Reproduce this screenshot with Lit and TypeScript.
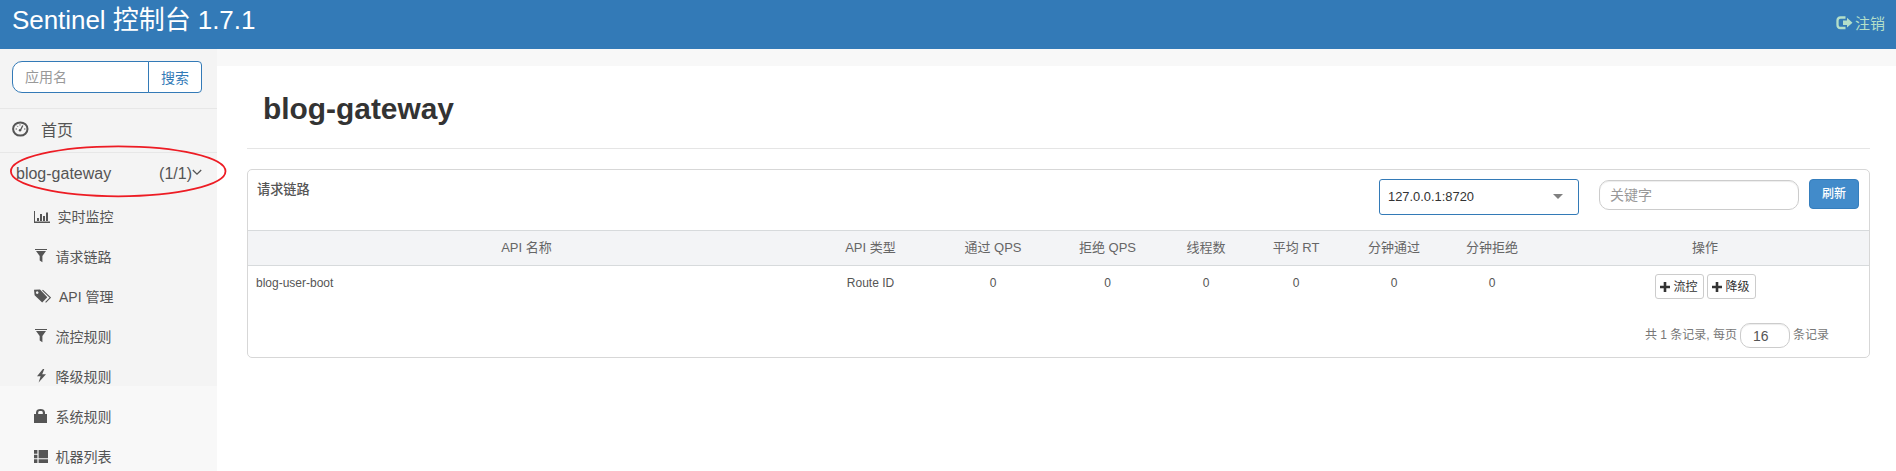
import { LitElement, html, css, svg } from "lit";
import { customElement } from "lit/decorators.js";

const font = css`"Liberation Sans", Arial, "Noto Sans CJK SC", sans-serif`;

const icons = {
  chart: svg`<path d="M0.5 0V11H16M0 11.5H16" fill="none" stroke="currentColor"/><path d="M3 7h2v3H3zM6 3h2v7H6zM9 5h2v5H9zM12 1.5h2V10h-2z" fill="currentColor"/>`,
  filter: svg`<path d="M0 0h12v1H0zM1 2h10L7.400 7v6.200L4.700 11.500V7z" fill="currentColor"/>`,
  tags: svg`<path fill-rule="evenodd" d="M0 .8 6 .6 13.3 8.2 8.2 13.6 .6 6.2zM3.2 2.3a1.3 1.3 0 1 0 .01 0z" fill="currentColor"/><path d="M8.5 1.2 16.3 8.6 11.6 13.4" fill="none" stroke="currentColor" stroke-width="1.1"/>`,
  flash: svg`<path d="M6.9 0 1 7.3h3.6L2.6 13.4 10 5.3H6.2L8.3 0z" fill="currentColor"/>`,
  lock: svg`<path fill-rule="evenodd" d="M0 5h2V3.2C2.3 1 3.8 0 6.5 0S10.700 1 11 3.200V5h2v9H0zM4.200 5h4.600V3.400C8.700 2.400 7.900 2 6.500 2S4.300 2.400 4.200 3.400z" fill="currentColor"/>`,
  list: svg`<path d="M0 0h3.400v3.700H0zM0 4.700h3.400v3.600H0zM0 9.300h3.400V13H0zM4.600 0h9.400v8.300H4.600zM4.600 9.300h9.400V13H4.600z" fill="currentColor"/>`,
};

type IconName = keyof typeof icons;

const menu: { icon: IconName; label: string; w: number; h: number; left: number; gap: number; lift: number }[] = [
  { icon: "chart", label: "实时监控", w: 16, h: 12, left: 34, gap: 7.5, lift: 0 },
  { icon: "filter", label: "请求链路", w: 12, h: 14, left: 35, gap: 8.5, lift: 3 },
  { icon: "tags", label: "API 管理", w: 17, h: 14, left: 34, gap: 8, lift: 2 },
  { icon: "filter", label: "流控规则", w: 12, h: 14, left: 35, gap: 8.5, lift: 3 },
  { icon: "flash", label: "降级规则", w: 11, h: 14, left: 36, gap: 8.5, lift: 2 },
  { icon: "lock", label: "系统规则", w: 13, h: 14, left: 34, gap: 8.5, lift: 2 },
  { icon: "list", label: "机器列表", w: 14, h: 13, left: 34, gap: 7.5, lift: 1 },
];

const headers = ["API 名称", "API 类型", "通过 QPS", "拒绝 QPS", "线程数", "平均 RT", "分钟通过", "分钟拒绝", "操作"];
const record = ["blog-user-boot", "Route ID", "0", "0", "0", "0", "0", "0"];

@customElement("side-bar")
class SideBar extends LitElement {
  static styles = css`
    :host { display: block; position: relative; width: 217px; height: 422px; flex: none; overflow: visible;
      background: linear-gradient(#f4f4f4 337px, #f8f8f8 337px); color: #555; font-family: ${font}; }
    * { box-sizing: border-box; }
    .search { display: flex; height: 59px; padding: 12px 0 0 12px; }
    .field { width: 137px; height: 32px; border: 1px solid #337ab7; border-radius: 10px 0 0 10px; background: #fff;
      padding-left: 12px; font-size: 14px; line-height: 30px; color: #999; }
    .go { width: 54px; height: 32px; margin-left: -1px; border: 1px solid #337ab7; border-radius: 0 4px 4px 0; background: #fff;
      text-align: center; font-size: 14px; line-height: 32px; color: #337ab7; }
    .home { display: flex; align-items: center; height: 44px; border-top: 1px solid #e7e7e7; padding: 0 0 4px 12px; gap: 12px;
      font-size: 16px; }
    .app { display: flex; align-items: center; height: 44px; border-top: 1px solid #e7e7e7; padding: 0 15px 2px 16px;
      font-size: 16px; }
    .count { margin-left: auto; }
    .chevron { margin-bottom: 3px; }
    .item { display: flex; align-items: center; height: 40px; font-size: 14px; line-height: 20px; white-space: pre; }
    .menu { padding-top: 1px; }
    svg { display: block; flex: none; }
    .mark { position: absolute; left: 9px; top: 95px; }
  `;
  render() {
    return html`
      <div class="search"><div class="field">应用名</div><div class="go">搜索</div></div>
      <div class="home">
        <svg width="17" height="16" viewBox="0 0 17 16"><ellipse cx="8.300" cy="8" rx="7.200" ry="6.600" fill="none" stroke="currentColor" stroke-width="2"/><path d="M8.300 9.500 10.800 4.500" stroke="currentColor" stroke-width="1.300"/><circle cx="8" cy="9.300" r="1.200" fill="currentColor"/><path d="M3.600 8h1.400M12 8h1.400M5 4.800l.9.900M8 3.300v1.200" stroke="currentColor"/></svg>
        <span>首页</span>
      </div>
      <div class="app">
        <span>blog-gateway</span><span class="count">(1/1)</span>
        <svg class="chevron" width="10" height="7" viewBox="0 0 10 7"><path d="M.8 1 5 5.200 9.200 1" fill="none" stroke="currentColor" stroke-width="1.300"/></svg>
      </div>
      <div class="menu">
        ${menu.map((m) => html`<div class="item" style="padding-left:${m.left}px;gap:${m.gap}px">
          <svg width=${m.w} height=${m.h} viewBox="0 0 ${m.w} ${m.h}" style="margin-bottom:${m.lift}px">${icons[m.icon]}</svg><span>${m.label}</span>
        </div>`)}
      </div>
      <svg class="mark" width="218" height="54" viewBox="0 0 218 54"><ellipse cx="109.200" cy="27.300" rx="107.300" ry="25" fill="none" stroke="#ed1c24" stroke-width="1.800"/></svg>
    `;
  }
}

@customElement("resource-panel")
class ResourcePanel extends LitElement {
  static styles = css`
    :host { display: block; height: 189px; border: 1px solid #d7d7d7; border-radius: 5px; background: #fff;
      color: #555; font-family: ${font}; box-sizing: border-box; overflow: hidden; }
    * { box-sizing: border-box; }
    .head { display: flex; align-items: flex-start; height: 61px; padding: 9px 10px 0 9px; border-bottom: 1px solid #d7dadc; }
    .name { margin-right: auto; font-size: 13.200px; font-weight: 500; line-height: 21px; }
    .select { display: flex; align-items: center; justify-content: space-between; width: 200px; height: 36px; padding: 0 15px 2px 8px;
      border: 1px solid #337ab7; border-radius: 3px; font-size: 12.900px; color: #333; }
    .keyword { width: 200px; height: 30px; margin: 1px 10px 0 20px; padding-left: 10px; border: 1px solid #ccc; border-radius: 10px;
      box-shadow: inset 0 1px 1px rgba(0,0,0,.075); font-size: 14px; line-height: 28px; color: #999; }
    .refresh { width: 50px; height: 30px; border: 1px solid #357ebd; border-radius: 4px; background: #428bca; color: #fff;
      text-align: center; font-size: 12px; line-height: 28px; font-weight: 500; }
    .row { display: grid; grid-template-columns: 557px 131px 114px 115px 82px 98px 98px 98px 1fr; text-align: center; }
    .titles { height: 35px; background: #f3f4f6; border-bottom: 1px solid #d7dadc; font-size: 13px; line-height: 34px; color: #666; }
    .values { height: 51px; padding-top: 8px; font-size: 12px; line-height: 18px; }
    .values .first { text-align: left; padding-left: 8px; }
    .ops { display: flex; justify-content: center; gap: 3px; }
    .op { display: flex; align-items: center; justify-content: center; gap: 3px; width: 49px; height: 25px; border: 1px solid #ccc;
      border-radius: 3px; font-size: 12px; line-height: 18px; color: #333; }
    .op span { padding-top: 1px; }
    .foot { display: flex; justify-content: flex-end; height: 31px; padding: 6px 40px 0 0; gap: 3px; font-size: 12px; line-height: 25px; color: #777; }
    .size { width: 50px; height: 25px; padding-left: 12px; border: 1px solid #ccc; border-radius: 10px;
      box-shadow: inset 0 1px 1px rgba(0,0,0,.075); font-size: 14px; line-height: 25px; color: #555; }
  `;
  render() {
    const plus = html`<svg width="10" height="10" viewBox="0 0 10 10"><path d="M3.700 0h2.600v3.700H10v2.600H6.300V10H3.700V6.300H0V3.700h3.700z" fill="currentColor"/></svg>`;
    return html`
      <div class="head">
        <div class="name">请求链路</div>
        <div class="select"><span>127.0.0.1:8720</span><svg width="10" height="5" viewBox="0 0 10 5"><path d="M0 0h10L5 5z" fill="#808080"/></svg></div>
        <div class="keyword">关键字</div>
        <div class="refresh">刷新</div>
      </div>
      <div class="row titles">${headers.map((h) => html`<div>${h}</div>`)}</div>
      <div class="row values">
        ${record.map((v, i) => html`<div class=${i ? "" : "first"}>${v}</div>`)}
        <div class="ops"><div class="op">${plus}<span>流控</span></div><div class="op">${plus}<span>降级</span></div></div>
      </div>
      <div class="foot"><span>共 1 条记录, 每页</span><div class="size">16</div><span>条记录</span></div>
    `;
  }
}

@customElement("app-root")
class AppRoot extends LitElement {
  static styles = css`
    :host { display: block; height: 471px; overflow: hidden; background: #f8f8f8; font-family: ${font}; }
    * { box-sizing: border-box; }
    .bar { display: flex; justify-content: space-between; height: 49px; padding: 0 11px 0 12px; background: #337ab7; color: #fff; }
    .brand { font-size: 26px; line-height: 40px; letter-spacing: -0.05px; }
    .logout { display: flex; align-items: center; gap: 2px; height: 45px; font-size: 15px; color: #b4dfc9; }
    .body { display: flex; }
    .main { flex: 1; height: 405px; margin-top: 17px; padding: 0 26px 0 30px; background: #fff; }
    .title { height: 83px; margin: 0 0 20px; padding: 26px 0 0 16px; border-bottom: 1px solid #e5e5e5; font-size: 29.900px; line-height: 33px; color: #333; }
    side-bar { z-index: 1; }
  `;
  render() {
    return html`
      <div class="bar">
        <div class="brand">Sentinel 控制台 1.7.1</div>
        <div class="logout">
          <svg width="17" height="14" viewBox="0 0 17 14"><path d="M9.500 1.500H4.500Q1.500 1.500 1.500 4.500V9Q1.500 12 4.500 12H9.500" fill="none" stroke="currentColor" stroke-width="2.300"/><path d="M7 4.500h4V1.700L16.500 6.700 11 11.500V9H7z" fill="currentColor"/></svg>
          <span>注销</span>
        </div>
      </div>
      <div class="body">
        <side-bar></side-bar>
        <div class="main">
          <h1 class="title">blog-gateway</h1>
          <resource-panel></resource-panel>
        </div>
      </div>
    `;
  }
}
